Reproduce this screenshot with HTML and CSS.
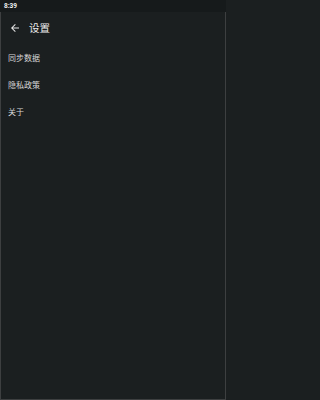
FILE: index.html
```html
<!DOCTYPE html>
<html lang="zh">
<head>
<meta charset="utf-8">
<link rel="stylesheet" href="styles.css">
</head>
<body>
<div class="screen">
  <div class="statusbar"><span class="time">8:39</span></div>
  <div class="frame">
    <header class="toolbar">
      <svg class="back" viewBox="0 0 24 24" width="12" height="12" aria-hidden="true">
        <path d="M20 11H7.83l5.59-5.59L12 4l-8 8 8 8 1.41-1.41L7.83 13H20v-2z" fill="#e6e6e6"/>
      </svg>
      <h1 class="title">设置</h1>
    </header>
    <ul class="menu">
      <li class="item">同步数据</li>
      <li class="item">隐私政策</li>
      <li class="item">关于</li>
    </ul>
  </div>
</div>
</body>
</html>
```

FILE: styles.css
```css
html, body {
  margin: 0;
  padding: 0;
  background: #1b1f20;
}
body {
  font-family: "Noto Sans CJK SC", "Noto Sans", sans-serif;
  color: #e6e6e6;
}
.screen {
  width: 226px;
  height: 400px;
  display: flex;
  flex-direction: column;
  background: #1b1f20;
}
.statusbar {
  height: 12px;
  background: #161a1b;
  display: flex;
  align-items: center;
  padding-left: 4px;
}
.time {
  font-family: "Roboto", "Liberation Sans", sans-serif;
  font-size: 6.5px;
  font-weight: 700;
  color: #f2f2f2;
  line-height: 1;
}
.frame {
  flex: 1;
  border-left: 1px solid #3d3f40;
  border-right: 1px solid #3d3f40;
  border-bottom: 1px solid #3d3f40;
  display: flex;
  flex-direction: column;
}
.toolbar {
  height: 32px;
  display: flex;
  align-items: center;
  padding-left: 8px;
  gap: 8px;
}
.back {
  display: block;
}
.title {
  margin: 0;
  font-size: 10.5px;
  font-weight: 400;
  color: #ececec;
  line-height: 1;
}
.menu {
  list-style: none;
  margin: 0;
  padding: 0;
}
.item {
  height: 27px;
  display: flex;
  align-items: center;
  padding-left: 7px;
  font-size: 8px;
  color: #d8d8d8;
}
```
